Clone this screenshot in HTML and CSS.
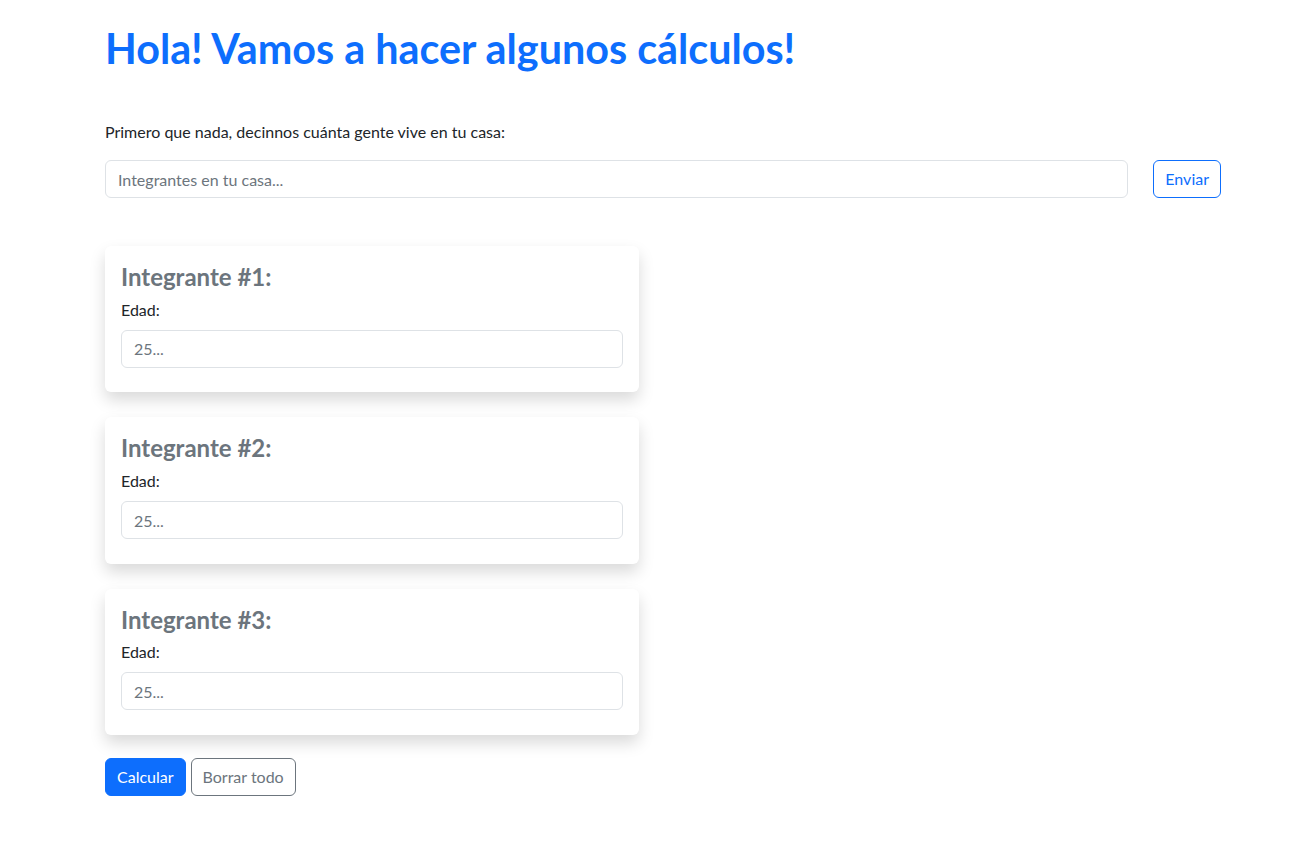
FILE: index.html
```html
<!DOCTYPE html>
<html lang="es">
<head>
<meta charset="utf-8">
<title>Cálculos</title>
<link rel="stylesheet" href="styles.css">
</head>
<body>
<main class="page">
  <h1 class="title">Hola! Vamos a hacer algunos cálculos!</h1>
  <p class="intro">Primero que nada, decinnos cuánta gente vive en tu casa:</p>
  <div class="ask-row">
    <input class="field" type="text" placeholder="Integrantes en tu casa...">
    <button class="btn btn-outline-primary">Enviar</button>
  </div>
  <div class="cards">
    <section class="card">
      <h3 class="card-title">Integrante #1:</h3>
      <label class="label">Edad:</label>
      <input class="field" type="text" placeholder="25...">
    </section>
    <section class="card">
      <h3 class="card-title">Integrante #2:</h3>
      <label class="label">Edad:</label>
      <input class="field" type="text" placeholder="25...">
    </section>
    <section class="card">
      <h3 class="card-title">Integrante #3:</h3>
      <label class="label">Edad:</label>
      <input class="field" type="text" placeholder="25...">
    </section>
  </div>
  <div class="actions">
    <button class="btn btn-primary">Calcular</button>
    <button class="btn btn-outline-secondary">Borrar todo</button>
  </div>
</main>
</body>
</html>
```
FILE: styles.css
```css
* { box-sizing: border-box; }
html, body { margin: 0; background: #fff; }
body {
  font-family: "Lato", "Noto Sans", sans-serif;
  font-size: 16px;
  line-height: 1.5;
  color: #212529;
}
.page {
  width: 1116px;
  margin-left: 105px;
  padding-top: 24px;
}
.title {
  margin: 0 0 48px;
  font-size: 41.3px;
  font-weight: 700;
  line-height: 48px;
  color: #0d6efd;
}
.intro {
  margin: 0 0 16px;
  font-size: 16px;
}
.ask-row {
  display: flex;
  gap: 25px;
  margin-bottom: 48px;
}
.field {
  display: block;
  width: 100%;
  height: 38px;
  padding: 6px 12px;
  font-family: inherit;
  font-size: 16px;
  color: #212529;
  background: #fff;
  border: 1px solid #dee2e6;
  border-radius: 6px;
  outline: none;
}
.field::placeholder { color: #6c757d; opacity: 1; }
.ask-row .field { flex: 1; }
.btn {
  height: 38px;
  padding: 6px 11px;
  font-family: inherit;
  font-size: 16px;
  line-height: 1.5;
  border-radius: 6px;
  border: 1px solid transparent;
  background: transparent;
  cursor: pointer;
  white-space: nowrap;
}
.btn-outline-primary { color: #0d6efd; border-color: #0d6efd; }
.btn-primary { color: #fff; background: #0d6efd; border-color: #0d6efd; }
.btn-outline-secondary { color: #6c757d; border-color: #6c757d; }
.cards {
  width: 534px;
  display: flex;
  flex-direction: column;
  gap: 25px;
  margin-bottom: 23px;
}
.card {
  background: #fff;
  border-radius: 6px;
  padding: 17px 16px 24.5px;
  box-shadow: 0 8px 16px rgba(0, 0, 0, 0.15);
}
.card-title {
  margin: 0 0 6px;
  font-size: 24px;
  font-weight: 700;
  line-height: 1.2;
  color: #6c757d;
}
.label {
  display: block;
  margin-bottom: 8px;
  font-size: 16px;
}
.actions {
  display: flex;
  gap: 5px;
}
```
